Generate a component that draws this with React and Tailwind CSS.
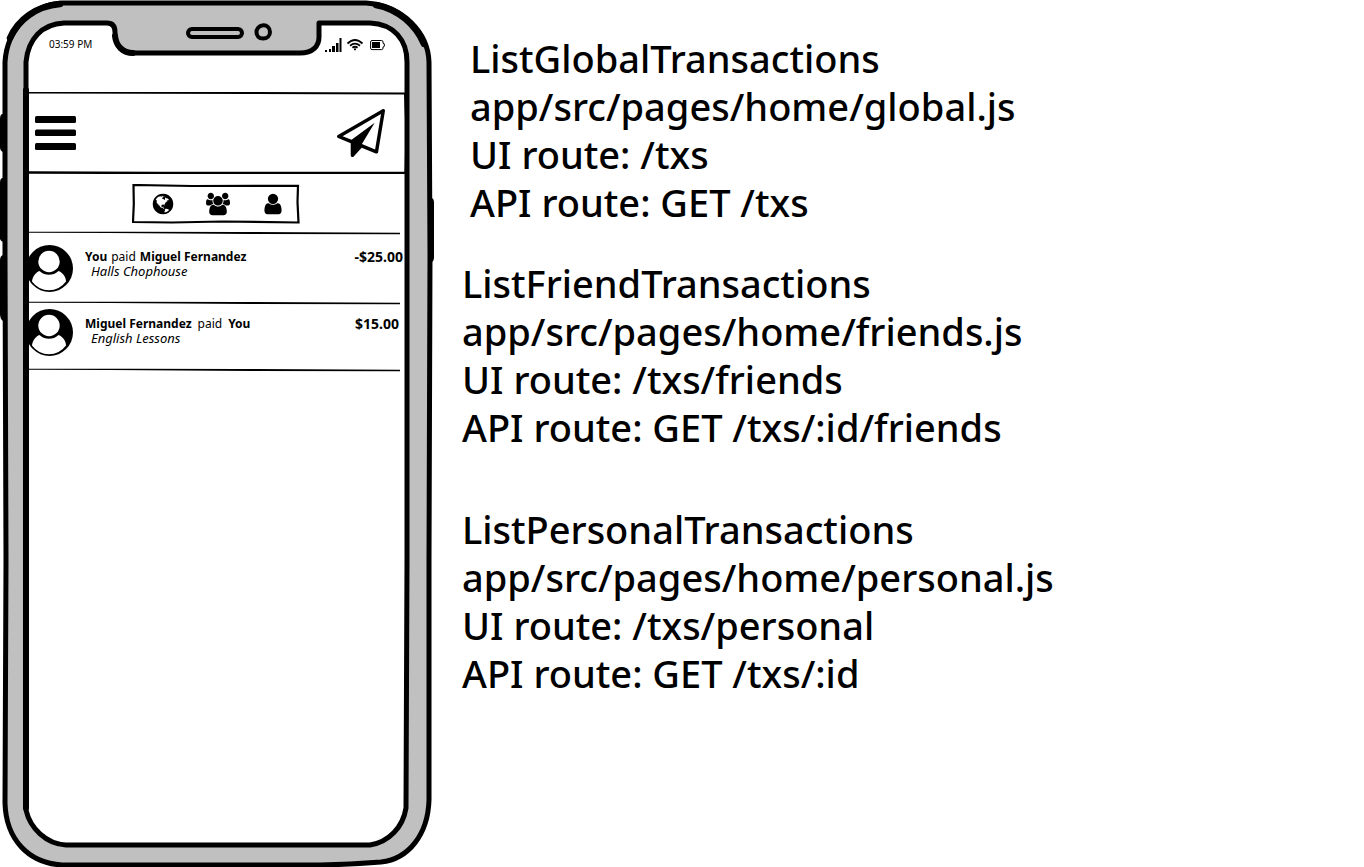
const GLOBE =
  "M896 128q209 0 385.5 103t279.5 279.5 103 385.5-103 385.5-279.5 279.5-385.5 103-385.5-103-279.5-279.5-103-385.5 103-385.5 279.5-279.5 385.5-103zm274 521q-2 1-9.5 9.5t-13.5 9.5q2 0 4.5-5t5-11 3.5-7q6-7 22-15 14-6 52-12 34-8 51 11-2-2 9.5-13t14.5-12q3-2 15-4.5t15-7.5l2-22q-12 1-17.5-7t-6.5-21q0 2-6 8 0-7-4.5-8t-11.5 1-9 1q-10-3-15-7.5t-8-16.5-4-15q-2-5-9.5-11t-9.5-10q-1-2-2.5-5.5t-3-6.5-4-5.5-5.5-2.5-7 5-7.5 10-4.5 5q-3-2-6-1.5t-4.5 1-4.5 3-5 3.5q-3 2-8.5 3t-8.5 2q15-5-1-11-10-4-16-3 9-4 7.5-12t-8.5-14h5q-1-4-8.5-8.5t-17.5-8.5-13-6q-8-5-34-9.5t-33-.5q-5 6-4.5 10.5t4 14 3.5 12.5q1 6-5.5 13t-6.5 12q0 7 14 15.5t10 21.5q-3 8-16 16t-16 12q-5 8-1.5 18.5t10.5 16.5q2 2 1.5 4t-3.5 4.5-5.5 4-6.5 3.5l-3 2q-11 5-20.5-6t-13.5-26q-7-25-16-30-23-8-29 1-5-13-41-26-25-9-58-4 6-1 0-15-7-15-19-12 3-6 4-17.5t1-13.5q3-13 12-23 1-1 7-8.5t9.5-13.5.5-6q35 4 50-11 5-5 11.5-17t10.5-17q9-6 14-5.5t14.5 5.5 14.5 5q14 1 15.5-11t-7.5-20q12 1 3-17-4-7-8-9-12-4-27 5-8 4 2 8-1-1-9.5 10.5t-16.5 17.5-16-5q-1-1-5.5-13.5t-9.5-13.5q-8 0-16 15 3-8-11-15t-24-8q19-12-8-27-7-4-20.5-5t-19.5 4q-5 7-5.5 11.5t5 8 10.5 5.5 11.5 4 8.5 3q14 10 8 14-2 1-8.5 3.5t-11.5 4.5-6 4q-3 4 0 14t-2 14q-5-5-9-17.5t-7-16.5q7 9-25 6l-10-1q-4 0-16 2t-20.5 1-13.5-8q-4-8 0-20 1-4 4-2-4-3-11-9.5t-10-8.5q-46 15-94 41 6 1 12-1 5-2 13-6.5t10-5.5q34-14 42-7l5-5q14 16 20 25-7-4-30-1-20 6-22 12 7 12 5 18-4-3-11.5-10t-14.5-11-15-5q-16 0-22 1-146 80-235 222 7 7 12 8 4 1 5 9t2.5 11 11.5-3q9 8 3 19 1-1 44 27 19 17 21 21 3 11-10 18-1-2-9-9t-9-4q-3 5 .5 18.5t10.5 12.5q-7 0-9.5 16t-2.5 35.5-1 23.5l2 1q-3 12 5.5 34.5t21.5 19.5q-13 3 20 43 6 8 8 9 3 2 12 7.5t15 10 10 10.5q4 5 10 22.5t14 23.5q-2 6 9.5 20t10.5 23q-1 0-2.5 1t-2.5 1q3 7 15.5 14t15.5 13q1 3 2 10t3 11 8 2q2-20-24-62-15-25-17-29-3-5-5.5-15.5t-4.5-14.5q2 0 6 1.5t8.5 3.5 7.5 4 2 3q-3 7 2 17.5t12 18.5 17 19 12 13q6 6 14 19.5t0 13.5q9 0 20 10t17 20q5 8 8 26t5 24q2 7 8.5 13.5t12.5 9.5l16 8 13 7q5 2 18.5 10.5t21.5 11.5q10 4 16 4t14.5-2.5 13.5-3.5q15-2 29 15t21 21q36 19 55 11-2 1 .5 7.5t8 15.5 9 14.5 5.5 8.5q5 6 18 15t18 15q6-4 7-9-3 8 7 20t18 10q14-3 14-32-31 15-49-18 0-1-2.5-5.5t-4-8.5-2.5-8.5 0-7.5 5-3q9 0 10-3.5t-2-12.5-4-13q-1-8-11-20t-12-15q-5 9-16 8t-16-9q0 1-1.5 5.5t-1.5 6.5q-13 0-15-1 1-3 2.5-17.5t3.5-22.5q1-4 5.5-12t7.5-14.5 4-12.5-4.5-9.5-17.5-2.5q-19 1-26 20-1 3-3 10.5t-5 11.5-9 7q-7 3-24 2t-24-5q-13-8-22.5-29t-9.5-37q0-10 2.5-26.5t3-25-5.5-24.5q3-2 9-9.5t10-10.5q2-1 4.5-1.5t4.5 0 4-1.5 3-6q-1-1-4-3-3-3-4-3 7 3 28.5-1.5t27.5 1.5q15 11 22-2 0-1-2.5-9.5t-.5-13.5q5 27 29 9 3 3 15.5 5t17.5 5q3 2 7 5.5t5.5 4.5 5-.5 8.5-6.5q10 14 12 24 11 40 19 44 7 3 11 2t4.5-9.5 0-14-1.5-12.5l-1-8v-18l-1-8q-15-3-18.5-12t1.5-18.5 15-18.5q1-1 8-3.5t15.5-6.5 12.5-8q21-19 15-35 7 0 11-9-1 0-5-3t-7.5-5-4.5-2q9-5 2-16 5-3 7.5-11t7.5-10q9 12 21 2 7-8 1-16 5-7 20.5-10.5t18.5-9.5q7 2 8-2t1-12 3-12q4-5 15-9t13-5l17-11q3-4 0-4 18 2 31-11 10-11-6-20 3-6-3-9.5t-15-5.5q3-1 11.5-.5t10.5-1.5q15-10-7-16-17-5-43 12zm-163 877q206-36 351-189-3-3-12.5-4.5t-12.5-3.5q-18-7-24-8 1-7-2.5-13t-8-9-12.5-8-11-7q-2-2-7-6t-7-5.5-7.5-4.5-8.5-2-10 1l-3 1q-3 1-5.5 2.5t-5.5 3-4 3 0 2.5q-21-17-36-22-5-1-11-5.5t-10.5-7-10-1.5-11.5 7q-5 5-6 15t-2 13q-7-5 0-17.5t2-18.5q-3-6-10.5-4.5t-12 4.5-11.5 8.5-9 6.5-8.5 5.5-8.5 7.5q-3 4-6 12t-5 11q-2-4-11.5-6.5t-9.5-5.5q2 10 4 35t5 38q7 31-12 48-27 25-29 40-4 22 12 26 0 7-8 20.5t-7 21.5q0 6 2 16z";
const USERS =
  "M529 896q-162 5-265 128h-134q-82 0-138-40.5t-56-118.5q0-353 124-353 6 0 43.5 21t97.5 42.5 119 21.5q67 0 133-23-5 37-5 66 0 139 81 256zm1071 637q0 120-73 189.5t-194 69.5h-874q-121 0-194-69.5t-73-189.5q0-53 3.5-103.5t14-109 26.5-108.5 43-97.5 62-81 85.5-53.5 111.5-20q10 0 43 21.5t73 48 107 48 135 21.5 135-21.5 107-48 73-48 43-21.5q61 0 111.5 20t85.5 53.5 62 81 43 97.5 26.5 108.5 14 109 3.5 103.5zm-1024-1277q0 106-75 181t-181 75-181-75-75-181 75-181 181-75 181 75 75 181zm704 384q0 159-112.5 271.5t-271.5 112.5-271.5-112.5-112.5-271.5 112.5-271.5 271.5-112.5 271.5 112.5 112.5 271.5zm576 225q0 78-56 118.5t-138 40.5h-134q-103-123-265-128 81-117 81-256 0-29-5-66 66 23 133 23 59 0 119-21.5t97.5-42.5 43.5-21q124 0 124 353zm-128-609q0 106-75 181t-181 75-181-75-75-181 75-181 181-75 181 75 75 181z";
const USER =
  "M1536 1399q0 109-62.5 187t-150.5 78h-854q-88 0-150.5-78t-62.5-187q0-85 8.5-160.5t31.5-152 58.5-131 94-89 134.5-34.5q131 128 313 128t313-128q76 0 134.5 34.5t94 89 58.5 131 31.5 152 8.5 160.5zm-256-887q0 159-112.5 271.5t-271.5 112.5-271.5-112.5-112.5-271.5 112.5-271.5 271.5-112.5 271.5 112.5 112.5 271.5z";
const PLANE =
  "M1764 11q33 24 27 64l-256 1536q-5 29-32 45-14 8-31 8-11 0-24-5l-527-215-298 327q-18 21-47 21-14 0-23-4-19-7-30-23.5t-11-36.5v-452l-472-193q-37-14-40-55-3-39 32-59l1664-960q35-21 68 2zm-342 1499l221-1323-1434 827 336 137 863-639-478 797z";

function Glyph({ path, viewBox = "0 0 1792 1792", className }) {
  return (
    <svg viewBox={viewBox} className={className} fill="currentColor" aria-hidden="true">
      <path d={path} />
    </svg>
  );
}

function PhoneFrame() {
  return (
    <svg
      viewBox="0 0 436 867"
      className="absolute inset-0 h-full w-full"
      fill="none"
      stroke="#000"
      strokeLinejoin="round"
      strokeLinecap="round"
      aria-hidden="true"
    >
      <g fill="#000" stroke="none">
        <path d="M5 114H2Q0 115 0 119V147Q0 151 3 152H5Z" />
        <path d="M5 178H2Q0 179 0 182V239Q1 242 5 242Z" />
        <path d="M5 255H3Q0 256 0 260V314Q0 319 3 321H5Z" />
        <path d="M429 198H432Q434 199 434 202V257Q434 262 431 262H429Z" />
      </g>
      <path
        d="M62 3H366C404 6 428 33 429 62L430 255L429 560L429 800C428 834 409 859 381 862Q350 864.500 320 865L62 865C28 863 6 839 5 803L6 560L5 255V62C7 30 30 5 62 3Z"
        fill="#c0c0c0"
        strokeWidth="5"
      />
      <path d="M10 38C18 20 36 6 60 4M376 5C398 9 416 25 424 44" strokeWidth="6.500" />
      <path
        d="M64 23H107Q115 23 115 32C115 45 121 53 133 53H300C313 53 319 46 319 37V23H370C394 24 407 40 407 62V255L407 560L406 808C403 827 389 842 370 845H66C46 844 30 828 26 810V62C28 39 42 24 64 23Z"
        fill="#fff"
        strokeWidth="5"
      />
      <path d="M26 90V808M115 36C116 46 123 53 133 53" strokeWidth="6" />
      <rect x="188" y="29" width="54" height="8" rx="4" strokeWidth="4" />
      <path d="M262 25.500C267 24.500 270 28 270 32C270 36 267 38.500 263 38.500C259 38.500 256.500 36 256.500 32C256.500 29 259 26 262 25.500Z" strokeWidth="4" />
    </svg>
  );
}

function SketchLine({ className }) {
  return (
    <svg viewBox="0 0 370 4" preserveAspectRatio="none" className={className} aria-hidden="true">
      <path d="M0 .8H100L210 .9L370 1.800V3.200L220 2.900L80 2.100L0 1.800Z" fill="#000" />
    </svg>
  );
}

function StatusBar() {
  return (
    <div className="flex h-[92px] items-start justify-between pt-[38px] pr-[23px] pl-5">
      <span className="text-[10px] leading-3">03:59 PM</span>
      <svg viewBox="0 0 60 16" className="h-4 w-[60px]" aria-hidden="true">
        <path d="M0 12H2V14H0ZM4 11H6V14H4ZM7 8H10V14H7ZM11 5H13.500V14H11ZM14.500 0H16.500V14H14.500Z" />
        <g fill="none" stroke="#000" strokeWidth="1.800">
          <path d="M22.500 5.500Q30 -1.500 37.500 5.500" />
          <path d="M25 7.800Q30 3.500 35 7.800" />
          <path d="M27.400 9.800Q30 7.600 32.600 9.800" />
        </g>
        <circle cx="30" cy="11.300" r="1.100" />
        <path
          d="M47 2.500H56.500Q58 2.500 58 4V5.200L59.300 5.800V8.400L58 9V10.200Q58 11.600 56.500 11.600H47Q45.600 11.600 45.600 10.200V4Q45.600 2.500 47 2.500Z"
          fill="none"
          stroke="#000"
        />
        <path d="M47 4H55V10H47Z" />
      </svg>
    </div>
  );
}

function Header() {
  return (
    <header className="relative flex h-[81px] items-center justify-between pr-[23px] pl-1.5">
      <svg
        viewBox="0 0 380 82"
        preserveAspectRatio="none"
        className="absolute inset-0 h-[82px] w-full"
        fill="none"
        stroke="#000"
        aria-hidden="true"
      >
        <path d="M0 .500L377 1.500" strokeWidth="2" />
        <path d="M0 80.500L130 81L377 81" strokeWidth="2.400" />
        <path d="M376.500 1L378 40L377 81" />
      </svg>
      <button type="button" aria-label="Menu" className="relative">
        <svg viewBox="0 0 41 34" className="h-[34px] w-[41px]" aria-hidden="true">
          <rect width="41" height="7" rx="1.500" />
          <rect y="13.500" width="41" height="6.500" rx="1.500" />
          <rect y="27" width="41" height="7" rx="1.500" />
        </svg>
      </button>
      <button type="button" aria-label="New transaction" className="relative">
        <Glyph path={PLANE} className="size-12" />
      </button>
    </header>
  );
}

function FeedTabs() {
  return (
    <div className="flex h-[59px] justify-center pt-[11px] pr-1.5">
      <nav aria-label="Feed" className="relative flex h-10 w-[168px] items-center justify-between pr-[15px] pl-[19px]">
        <svg
          viewBox="0 0 168 40"
          preserveAspectRatio="none"
          className="absolute inset-0 h-full w-full"
          fill="none"
          stroke="#000"
          strokeWidth="2.200"
          aria-hidden="true"
        >
          <path d="M1.500 1L60 2L166 1.800L165.500 18L166.500 38.500L90 37.500L40 38.500L1 38L1.800 20Z" />
        </svg>
        <button type="button" aria-label="Everyone" className="relative">
          <Glyph path={GLOBE} className="size-6" />
        </button>
        <button type="button" aria-label="Friends" className="relative">
          <Glyph path={USERS} viewBox="-64 0 1920 1792" className="size-6" />
        </button>
        <button type="button" aria-label="Personal" className="relative">
          <Glyph path={USER} className="size-6" />
        </button>
      </nav>
    </div>
  );
}

function Avatar() {
  return (
    <svg viewBox="3 -.5 45 48" className="h-12 w-[45px] shrink-0" aria-hidden="true">
      <circle cx="23.500" cy="24" r="23.500" />
      <circle cx="23" cy="17" r="10.700" fill="#fff" />
      <path
        d="M13.500 26.500C16.500 29.300 19.500 30.300 23 30.300C26.500 30.300 29.500 29.300 32.500 26.500C37.500 28.500 40 33 40 37A21 21 0 0 1 6 37C6.500 33 8.500 28.500 13.500 26.500Z"
        fill="#fff"
      />
    </svg>
  );
}

const transactions = [
  { from: "You", to: "Miguel Fernandez", note: "Halls Chophouse", amount: "-$25.00", row: "h-[71px] pt-[12px] pr-[5px]", text: "pt-[6px]", parties: "gap-1" },
  { from: "Miguel Fernandez", to: "You", note: "English Lessons", amount: "$15.00", row: "h-[67px] pt-[5px] pr-[9px]", text: "pt-[9px]", parties: "gap-1.5" },
];

function Transaction({ from, to, note, amount, row, text, parties }) {
  return (
    <li className="relative">
      <div className={`flex items-start ${row}`}>
        <Avatar />
        <div className={`flex flex-1 justify-between pl-[11px] text-[13px] leading-[14px] ${text}`}>
          <div>
            <p className={`flex text-[12px] leading-[14px] ${parties}`}>
              <b>{from}</b>
              <span>paid</span>
              <b>{to}</b>
            </p>
            <p className="pl-1.5 italic">{note}</p>
          </div>
          <b className="text-sm leading-[14px]">{amount}</b>
        </div>
      </div>
      <SketchLine className="absolute bottom-[-2px] left-0 h-1 w-[371px]" />
    </li>
  );
}

const noteGroups = [
  {
    offset: "pl-2",
    lines: ["ListGlobalTransactions", "app/src/pages/home/global.js", "UI route: /txs", "API route: GET /txs"],
  },
  {
    offset: "pt-[33px]",
    lines: ["ListFriendTransactions", "app/src/pages/home/friends.js", "UI route: /txs/friends", "API route: GET /txs/:id/friends"],
  },
  {
    offset: "pt-[54px]",
    lines: ["ListPersonalTransactions", "app/src/pages/home/personal.js", "UI route: /txs/personal", "API route: GET /txs/:id"],
  },
];

export default function App() {
  return (
    <div className="flex min-h-screen items-start bg-white font-['Noto_Sans',sans-serif] text-black">
      <section aria-label="Phone" className="relative h-[867px] w-[436px] shrink-0">
        <PhoneFrame />
        <div className="relative pr-7 pl-[29px]">
          <StatusBar />
          <Header />
          <FeedTabs />
          <div className="relative">
            <SketchLine className="absolute top-[-1px] left-0 h-1 w-[371px]" />
            <ul>
              {transactions.map((t) => (
                <Transaction key={t.note} {...t} />
              ))}
            </ul>
          </div>
        </div>
      </section>
      <main className="flex-1 pt-[34px] pl-[26px] text-[38px] leading-[48px] font-medium">
        {noteGroups.map((g) => (
          <section key={g.lines[0]} className={g.offset}>
            {g.lines.map((line) => (
              <p key={line}>{line}</p>
            ))}
          </section>
        ))}
      </main>
    </div>
  );
}
